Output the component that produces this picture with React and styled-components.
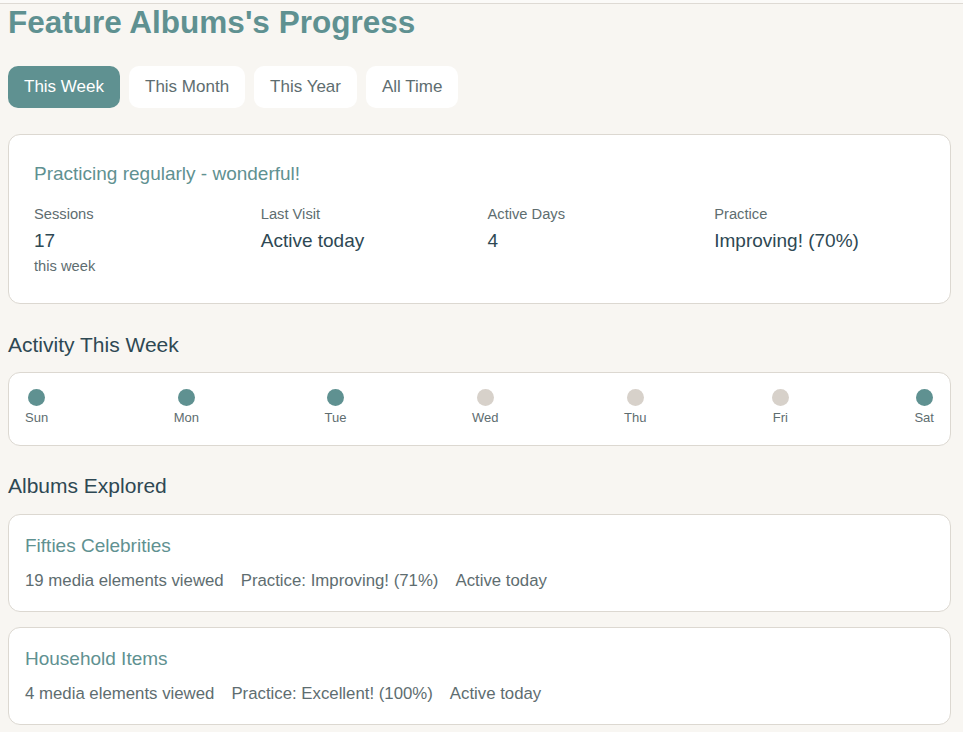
import React from "react";
import styled, { createGlobalStyle } from "styled-components";

const GlobalStyle = createGlobalStyle`
  body {
    margin: 0;
    background: #f8f6f2;
    font-family: "Liberation Sans", Arial, sans-serif;
  }
`;

const TEAL = "#5f9191";
const DARK = "#2e4853";
const GREY = "#5e6d70";

const TopEdge = styled.div`
  height: 3px;
  background: #fbfaf8;
  border-bottom: 1px solid #dedad4;
`;

const Page = styled.main`
  padding: 0 12px 0 8px;
`;

const Title = styled.h1`
  margin: 0;
  font-size: 31.5px;
  line-height: 36px;
  font-weight: 700;
  color: ${TEAL};
`;

const Tabs = styled.div`
  display: flex;
  gap: 9px;
  margin-top: 26px;
`;

const Tab = styled.button`
  height: 42px;
  padding: 0 16px;
  border: none;
  border-radius: 10px;
  font-family: inherit;
  font-size: 17px;
  background: ${(p) => (p.$active ? TEAL : "#ffffff")};
  color: ${(p) => (p.$active ? "#ffffff" : GREY)};
  cursor: pointer;
`;

const Card = styled.section`
  background: #ffffff;
  border: 1px solid #dcd8d1;
  border-radius: 12px;
`;

const SummaryCard = styled(Card)`
  margin-top: 26px;
  padding: 28px 25px 28px;
`;

const SummaryHeading = styled.div`
  font-size: 19px;
  line-height: 22px;
  color: ${TEAL};
`;

const StatGrid = styled.div`
  display: grid;
  grid-template-columns: repeat(4, 1fr);
  gap: 16px;
  margin-top: 20px;
`;

const StatLabel = styled.div`
  font-size: 14.7px;
  line-height: 18px;
  color: ${GREY};
`;

const StatValue = styled.div`
  font-size: 19px;
  line-height: 22px;
  margin-top: 7px;
  color: ${DARK};
`;

const StatNote = styled.div`
  font-size: 14.7px;
  line-height: 18px;
  margin-top: 5px;
  color: ${GREY};
`;

const SectionTitle = styled.h2`
  margin: ${(p) => p.$top}px 0 ${(p) => p.$bottom}px;
  font-size: 21px;
  line-height: 24px;
  font-weight: 400;
  color: ${DARK};
`;

const WeekCard = styled(Card)`
  display: flex;
  justify-content: space-between;
  padding: 16px 16px 19px;
`;

const Day = styled.div`
  display: flex;
  flex-direction: column;
  align-items: center;
  gap: 4px;
`;

const Dot = styled.span`
  width: 17px;
  height: 17px;
  border-radius: 50%;
  background: ${(p) => (p.$on ? TEAL : "#d7d1ca")};
`;

const DayLabel = styled.span`
  font-size: 13px;
  line-height: 16px;
  color: ${GREY};
`;

const AlbumList = styled.div`
  display: flex;
  flex-direction: column;
  gap: 15px;
`;

const AlbumCard = styled(Card)`
  padding: 20px 16px 20px;
`;

const AlbumName = styled.div`
  font-size: 19px;
  line-height: 22px;
  color: ${TEAL};
`;

const AlbumMeta = styled.div`
  display: flex;
  gap: 17px;
  margin-top: 14px;
  font-size: 16.8px;
  line-height: 20px;
  color: ${GREY};
`;

const ranges = ["This Week", "This Month", "This Year", "All Time"];

const stats = [
  { label: "Sessions", value: "17", note: "this week" },
  { label: "Last Visit", value: "Active today" },
  { label: "Active Days", value: "4" },
  { label: "Practice", value: "Improving! (70%)" },
];

const days = [
  { d: "Sun", on: true },
  { d: "Mon", on: true },
  { d: "Tue", on: true },
  { d: "Wed", on: false },
  { d: "Thu", on: false },
  { d: "Fri", on: false },
  { d: "Sat", on: true },
];

const albums = [
  { name: "Fifties Celebrities", viewed: 19, practice: "Improving! (71%)" },
  { name: "Household Items", viewed: 4, practice: "Excellent! (100%)" },
];

export default function App() {
  return (
    <>
      <GlobalStyle />
      <TopEdge />
      <Page>
        <Title>Feature Albums's Progress</Title>
        <Tabs>
          {ranges.map((r, i) => (
            <Tab key={r} $active={i === 0}>
              {r}
            </Tab>
          ))}
        </Tabs>

        <SummaryCard>
          <SummaryHeading>Practicing regularly - wonderful!</SummaryHeading>
          <StatGrid>
            {stats.map((s) => (
              <div key={s.label}>
                <StatLabel>{s.label}</StatLabel>
                <StatValue>{s.value}</StatValue>
                {s.note && <StatNote>{s.note}</StatNote>}
              </div>
            ))}
          </StatGrid>
        </SummaryCard>

        <SectionTitle $top={29} $bottom={15}>Activity This Week</SectionTitle>
        <WeekCard>
          {days.map((day) => (
            <Day key={day.d}>
              <Dot $on={day.on} />
              <DayLabel>{day.d}</DayLabel>
            </Day>
          ))}
        </WeekCard>

        <SectionTitle $top={28} $bottom={16}>Albums Explored</SectionTitle>
        <AlbumList>
          {albums.map((a) => (
            <AlbumCard key={a.name}>
              <AlbumName>{a.name}</AlbumName>
              <AlbumMeta>
                <span>{a.viewed} media elements viewed</span>
                <span>Practice: {a.practice}</span>
                <span>Active today</span>
              </AlbumMeta>
            </AlbumCard>
          ))}
        </AlbumList>
      </Page>
    </>
  );
}
